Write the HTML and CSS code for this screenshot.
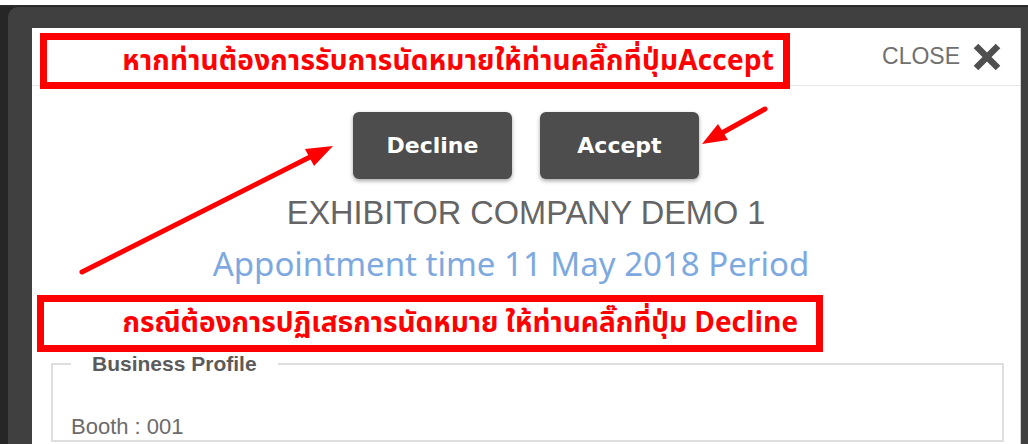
FILE: index.html
```html
<!DOCTYPE html>
<html lang="th">
<head>
<meta charset="utf-8">
<title>Appointment</title>
<link rel="stylesheet" href="styles.css">
</head>
<body>
  <div class="page-strip"></div>
  <div class="backdrop">
    <div class="frame">
      <div class="modal">
        <div class="modal-header">
          <span class="close-label">CLOSE</span>
          <svg class="close-icon" viewBox="0 0 30 30" width="30" height="30" aria-hidden="true">
            <path d="M4 4 L26 26 M26 4 L4 26" stroke="#4f4f4f" stroke-width="6.5" fill="none"/>
          </svg>
        </div>
        <div class="actions">
          <button class="btn" type="button">Decline</button>
          <button class="btn" type="button">Accept</button>
        </div>
        <h2 class="company">EXHIBITOR COMPANY DEMO 1</h2>
        <p class="appointment">Appointment time 11 May 2018 Period</p>
        <fieldset class="profile">
          <legend>Business Profile</legend>
          <p class="booth">Booth : 001</p>
        </fieldset>
      </div>
    </div>
  </div>

  <div class="note note-accept">หากท่านต้องการรับการนัดหมายให้ท่านคลิ๊กที่ปุ่มAccept</div>
  <div class="note note-decline">กรณีต้องการปฏิเสธการนัดหมาย ให้ท่านคลิ๊กที่ปุ่ม Decline</div>

  <svg class="pointers" width="1028" height="444" viewBox="0 0 1028 444" aria-hidden="true">
    <g stroke="#ff0000" stroke-width="5" stroke-linecap="round" fill="#ff0000">
      <line x1="82" y1="272" x2="312" y2="156"/>
      <line x1="765" y1="109" x2="720" y2="134"/>
    </g>
    <g fill="#ff0000">
      <polygon points="333,146 314,166 305,149"/>
      <polygon points="702,144 728,140 718,124"/>
    </g>
  </svg>
</body>
</html>
```

FILE: styles.css
```css
html, body {
  margin: 0;
  padding: 0;
}

body {
  width: 1028px;
  height: 444px;
  overflow: hidden;
  position: relative;
  background: #262626;
  font-family: "Liberation Sans", Arial, sans-serif;
}

.page-strip {
  height: 5px;
  background: #ffffff;
  border-bottom: 2px solid #2b2b2b;
}

.backdrop {
  padding-left: 8px;
}

.frame {
  background: #404040;
  border-radius: 10px 0 0 0;
  padding: 21px 7px 0 24px;
  height: 437px;
  box-sizing: border-box;
}

.modal {
  background: #ffffff;
  border-right: 1px solid #cfcfcf;
  height: 100%;
  box-sizing: border-box;
}

.modal-header {
  height: 57px;
  border-bottom: 1px solid #e6e6e6;
  display: flex;
  justify-content: flex-end;
  align-items: center;
  gap: 12px;
  padding-right: 18px;
}

.close-label {
  font-size: 23px;
  color: #707070;
}

.close-icon {
  display: block;
  margin-top: 1px;
}

.actions {
  display: flex;
  justify-content: center;
  gap: 28px;
  margin-top: 26px;
}

.btn {
  width: 159px;
  height: 67px;
  border: none;
  border-radius: 6px;
  background: #4d4d4d;
  color: #ffffff;
  font-family: "DejaVu Sans", sans-serif;
  font-weight: bold;
  font-size: 22px;
  box-shadow: 0 2px 4px rgba(0, 0, 0, 0.35);
  padding: 0;
}

.company {
  margin: 16px 0 0;
  text-align: center;
  font-weight: normal;
  font-size: 32.5px;
  line-height: 36px;
  color: #656565;
}

.appointment {
  margin: 13px 0 0;
  text-align: center;
  font-family: "Noto Sans", sans-serif;
  font-size: 33px;
  line-height: 40px;
  color: #7ea9df;
  padding-right: 30px;
}

.profile {
  margin: 68px 16px 0 19px;
  border: 2px solid #dedede;
  padding: 38px 18px 0;
}

.profile legend {
  padding: 0 21px;
  font-weight: bold;
  font-size: 21px;
  line-height: 24px;
  color: #5b5b5b;
}

.booth {
  margin: 0;
  font-size: 22px;
  line-height: 26px;
  color: #6b6b6b;
}

/* red callouts drawn over the dialog */
.note {
  position: absolute;
  box-sizing: border-box;
  border: 7px solid #ff0000;
  display: flex;
  align-items: center;
  justify-content: flex-end;
  color: #ff0000;
  font-family: "Noto Sans Thai", Tahoma, "Loma", "Garuda", "Liberation Sans", sans-serif;
  font-weight: bold;
  font-size: 28px;
  white-space: nowrap;
}

.note-accept {
  left: 40px;
  top: 33px;
  width: 750px;
  height: 56px;
  padding-right: 9px;
  letter-spacing: 0.2px;
}

.note-decline {
  left: 37px;
  top: 295px;
  width: 786px;
  height: 57px;
  padding-right: 18px;
}

.pointers {
  position: absolute;
  left: 0;
  top: 0;
  pointer-events: none;
}
```
